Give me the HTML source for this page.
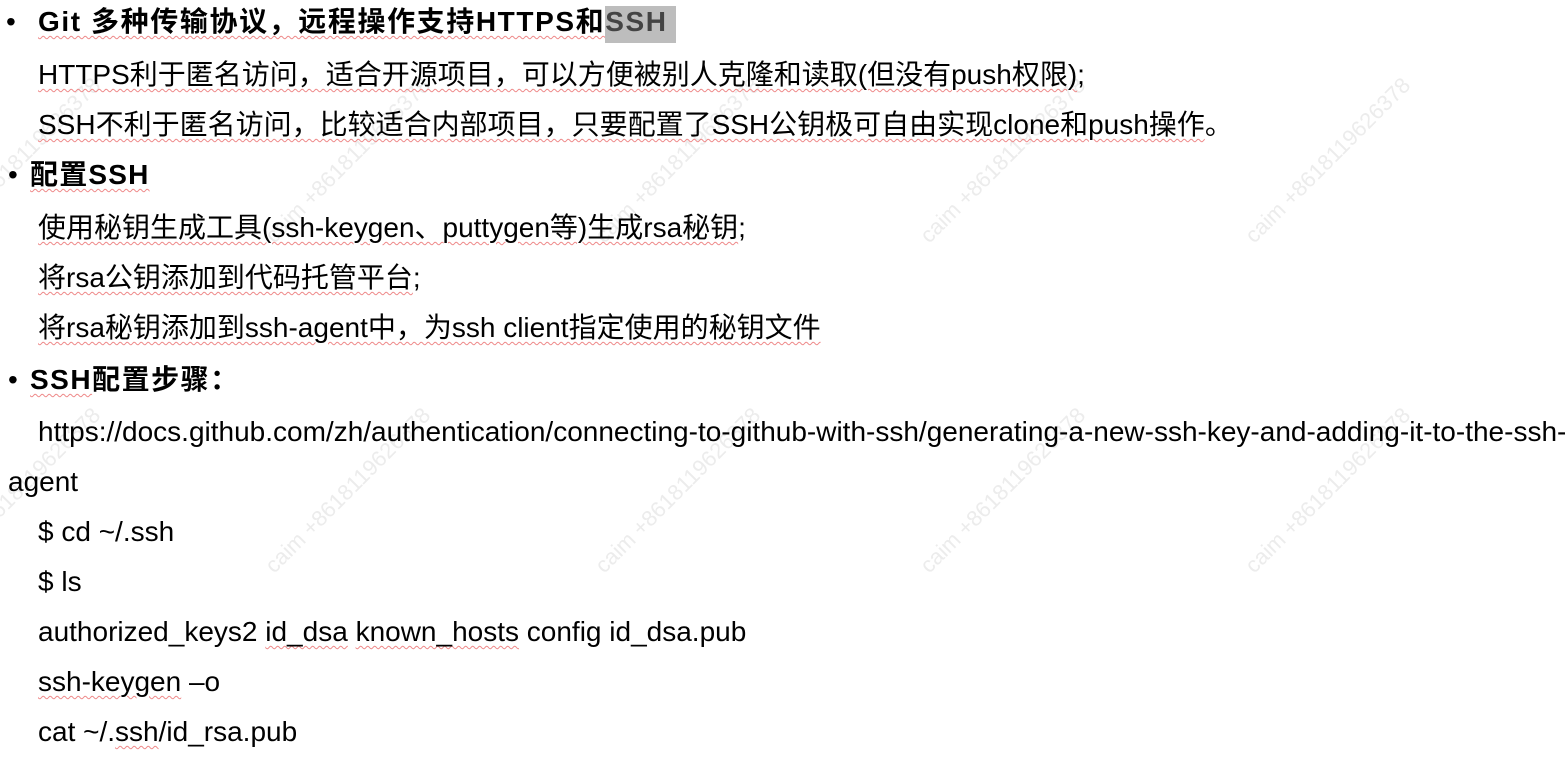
<!DOCTYPE html>
<html><head><meta charset="utf-8"><style>
html,body{margin:0;width:1565px;height:780px;background:#fff;overflow:hidden;position:relative;font-family:"Liberation Sans","Noto Sans CJK SC",sans-serif;color:#000}
.l{position:absolute;font-size:28px;line-height:32px;white-space:nowrap}
.u{text-decoration:underline wavy #e88;text-decoration-thickness:1px;text-underline-offset:4px}
b{font-weight:bold}
.w{position:absolute;font-size:22px;color:#ececec;transform:rotate(-45deg);transform-origin:left top;white-space:nowrap;font-family:"Liberation Sans",sans-serif}
</style></head><body>
<div class="w" style="left:260px;top:560px">caim +8618119626378</div>
<div class="w" style="left:590px;top:560px">caim +8618119626378</div>
<div class="w" style="left:915px;top:560px">caim +8618119626378</div>
<div class="w" style="left:1240px;top:560px">caim +8618119626378</div>
<div class="w" style="left:260px;top:230px">caim +8618119626378</div>
<div class="w" style="left:590px;top:230px">caim +8618119626378</div>
<div class="w" style="left:915px;top:230px">caim +8618119626378</div>
<div class="w" style="left:1240px;top:230px">caim +8618119626378</div>
<div class="w" style="left:-70px;top:230px">caim +8618119626378</div>
<div class="w" style="left:-70px;top:560px">caim +8618119626378</div>

<div class="l" style="left:6px;top:6px">•</div>
<div class="l" style="left:38px;top:6px;letter-spacing:1.6px"><b class="u">Git 多种传输协议，远程操作支持HTTPS和</b><b style="background:#bdbdbd;color:#444;padding:0 8px 6px 0">SSH</b></div>
<div class="l" style="left:38px;top:59px"><span class="u">HTTPS利于匿名访问，适合开源项目，可以方便被别人克隆和读取(但没有push权限)</span>;</div>
<div class="l" style="left:38px;top:109px"><span class="u">SSH不利于匿名访问，比较适合内部项目，只要配置了SSH公钥极可自由实现clone和push操作</span>。</div>
<div class="l" style="left:8px;top:159px">•</div>
<div class="l" style="left:30px;top:159px;letter-spacing:1.2px"><b class="u">配置SSH</b></div>
<div class="l" style="left:38px;top:212px"><span class="u">使用秘钥生成工具(ssh-keygen、puttygen等)生成rsa秘钥</span>;</div>
<div class="l" style="left:38px;top:262px"><span class="u">将rsa公钥添加到代码托管平台</span>;</div>
<div class="l" style="left:38px;top:312px"><span class="u">将rsa秘钥添加到ssh-agent中，为ssh client指定使用的秘钥文件</span></div>
<div class="l" style="left:8px;top:364px">•</div>
<div class="l" style="left:30px;top:364px;letter-spacing:1.5px"><b><span class="u">SSH</span>配置步骤：</b></div>
<div class="l" style="left:38px;top:416px">https://docs.github.com/zh/authentication/connecting-to-github-with-ssh/generating-a-new-ssh-key-and-adding-it-to-the-ssh-</div>
<div class="l" style="left:8px;top:466px">agent</div>
<div class="l" style="left:38px;top:516px">$ cd ~/.ssh</div>
<div class="l" style="left:38px;top:566px">$ ls</div>
<div class="l" style="left:38px;top:616px">authorized_keys2 <span class="u">id_dsa</span> <span class="u">known_hosts</span> config id_dsa.pub</div>
<div class="l" style="left:38px;top:666px"><span class="u">ssh-keygen</span> –o</div>
<div class="l" style="left:38px;top:716px">cat ~/.<span class="u">ssh</span>/id_rsa.pub</div>
</body></html>
